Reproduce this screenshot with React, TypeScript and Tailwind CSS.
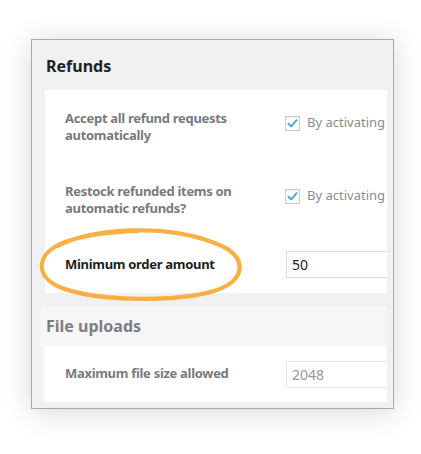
import React from "react";

function Check() {
  return (
    <span className="flex h-[15px] w-[15px] shrink-0 items-center justify-center border border-[#c8cbce] bg-white shadow-[inset_0_1px_2px_rgba(0,0,0,0.07)]">
      <svg width="13" height="13" viewBox="0 0 13 13">
        <path d="M2.5 6.8 L5.2 9.4 L10.6 3.2" fill="none" stroke="#4aa6dc" strokeWidth="2" strokeLinecap="round" strokeLinejoin="round" />
      </svg>
    </span>
  );
}

export default function App() {
  const font = { fontFamily: '"Noto Sans", "Open Sans", sans-serif' };
  return (
    <div className="relative h-[454px] w-[421px] overflow-hidden bg-white" style={font}>
      <div className="pl-[31px] pt-[39px]">
        <div className="flex h-[370px] w-[363px] flex-col overflow-hidden border border-[#a9a9a9] bg-[#f1f1f1] shadow-[0_3px_28px_rgba(0,0,0,0.16)]">
          <div className="flex h-[50px] shrink-0 items-center pl-[14px] pt-[1px] text-[16px] font-bold text-[#1d2327]">Refunds</div>
          <div className="ml-[13px] w-[342px] shrink-0 overflow-hidden bg-white">
            <div className="flex h-[73px] pt-[20px]">
              <div className="w-[240px] shrink-0 pl-[20px] text-[13px] font-bold leading-[17px] tracking-[-0.3px] text-[#777a7e]">
                Accept all refund requests
                <br />
                automatically
              </div>
              <div className="mt-[5px] flex h-[16px] shrink-0 items-center gap-[7px] whitespace-nowrap text-[13px] text-[#8a8d90]">
                <Check />
                <span>By activating</span>
              </div>
            </div>
            <div className="flex h-[73px] pt-[20px]">
              <div className="w-[240px] shrink-0 pl-[20px] text-[13px] font-bold leading-[17px] tracking-[-0.3px] text-[#777a7e]">
                Restock refunded items on
                <br />
                automatic refunds?
              </div>
              <div className="mt-[5px] flex h-[16px] shrink-0 items-center gap-[7px] whitespace-nowrap text-[13px] text-[#8a8d90]">
                <Check />
                <span>By activating</span>
              </div>
            </div>
            <div className="flex h-[57px] items-center">
              <div className="w-[241px] shrink-0 pl-[20px] text-[13px] font-bold tracking-[-0.3px] text-[#1d1d1d]">Minimum order amount</div>
              <div className="flex h-[27px] flex-1 items-center border border-r-0 border-[#dcdcde] pl-[5px] text-[14px] text-[#222]">50</div>
            </div>
          </div>
          <div className="mt-[13px] ml-[9px] w-[346px] shrink-0 bg-[#f6f6f6]">
            <div className="flex h-[40px] items-center pl-[5px] text-[16px] font-bold text-[#7b7e82]">File uploads</div>
            <div className="ml-[4px] flex h-[56px] items-center overflow-hidden bg-white">
              <div className="w-[241px] shrink-0 pl-[20px] text-[13px] font-bold tracking-[-0.3px] text-[#777a7e]">Maximum file size allowed</div>
              <div className="flex h-[27px] flex-1 items-center border border-r-0 border-[#e8e8e8] pl-[5px] text-[14px] text-[#999]">2048</div>
            </div>
          </div>
        </div>
      </div>
      <svg className="pointer-events-none absolute left-0 top-0" width="421" height="454" viewBox="0 0 421 454">
        <path
          d="M58 246 C 90 228, 170 222, 222 246 C 248 258, 246 281, 214 291 C 176 302, 100 302, 62 288 C 36 278, 34 256, 62 243 C 80 236, 110 232, 138 231"
          fill="none"
          stroke="#f7a630"
          strokeWidth="4"
          strokeLinecap="round"
          opacity="0.9"
        />
        <path
          d="M60 245 C 92 229, 168 224, 220 247 C 245 259, 244 280, 213 290 C 176 300, 102 300, 63 287"
          fill="none"
          stroke="#f9b548"
          strokeWidth="1.2"
          strokeLinecap="round"
          opacity="0.7"
        />
      </svg>
    </div>
  );
}
